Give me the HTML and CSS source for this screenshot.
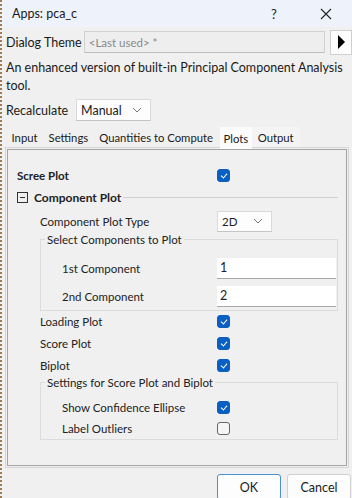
FILE: index.html
```html
<!DOCTYPE html>
<html>
<head>
<meta charset="utf-8">
<link rel="stylesheet" href="styles.css">
</head>
<body>
<div class="win">
  <div class="titlebar">
    <span class="title">Apps: pca_c</span>
    <span class="help">?</span>
    <span class="close"><svg width="12" height="12" viewBox="0 0 12 12"><path d="M1 1L11 11M11 1L1 11" stroke="#222" stroke-width="1.1" fill="none"/></svg></span>
  </div>
  <div class="theme-row">
    <span class="theme-label">Dialog Theme</span>
    <div class="theme-input">&lt;Last used&gt; *</div>
    <div class="theme-btn"><svg width="8" height="14" viewBox="0 0 8 14"><path d="M1 0L8 7L1 14Z" fill="#000"/></svg></div>
  </div>
  <p class="desc">An enhanced version of built-in Principal Component Analysis tool.</p>
  <div class="recalc-row">
    <span>Recalculate</span>
    <div class="select recalc-select"><span>Manual</span><svg width="10" height="6" viewBox="0 0 10 6"><path d="M1 1L5 5L9 1" stroke="#777" fill="none"/></svg></div>
  </div>
  <div class="tabs">
    <span class="tab">Input</span>
    <span class="tab">Settings</span>
    <span class="tab">Quantities to Compute</span>
    <span class="tab active">Plots</span>
    <span class="tab light">Output</span>
  </div>
  <div class="panel">
    <div class="panel-inner">
      <div class="row l0 bold"><span class="label">Scree Plot</span><span class="cb on"></span></div>
      <div class="section">
        <span class="minus"></span><span class="sec-title">Component Plot</span><span class="sec-line"></span>
      </div>
      <div class="row l1"><span class="label">Component Plot Type</span><div class="select type-select"><span>2D</span><svg width="10" height="6" viewBox="0 0 10 6"><path d="M1 1L5 5L9 1" stroke="#777" fill="none"/></svg></div></div>
      <fieldset class="group">
        <legend>Select Components to Plot</legend>
        <div class="row l2 inrow"><span class="label">1st Component</span><div class="textbox">1</div></div>
        <div class="row l2 inrow"><span class="label">2nd Component</span><div class="textbox">2</div></div>
      </fieldset>
      <div class="row l1 cbrow"><span class="label">Loading Plot</span><span class="cb on"></span></div>
      <div class="row l1 cbrow"><span class="label">Score Plot</span><span class="cb on"></span></div>
      <div class="row l1 cbrow"><span class="label">Biplot</span><span class="cb on"></span></div>
      <fieldset class="group group2">
        <legend>Settings for Score Plot and Biplot</legend>
        <div class="row l2 cbrow"><span class="label">Show Confidence Ellipse</span><span class="cb on"></span></div>
        <div class="row l2 cbrow"><span class="label">Label Outliers</span><span class="cb"></span></div>
      </fieldset>
    </div>
  </div>
  <div class="buttons">
    <div class="btn ok">OK</div>
    <div class="btn">Cancel</div>
  </div>
</div>
</body>
</html>
```
FILE: styles.css
```css
* { box-sizing: border-box; }
html, body { margin: 0; padding: 0; }
body {
  width: 352px; height: 498px; overflow: hidden;
  font-family: Lato, "Noto Sans", sans-serif;
  color: #1a1a1a;
  background: #f0f0f0;
}
.win {
  width: 352px; height: 498px;
  border-left: 2px dotted #a07a52;
  background: #f0f0f0;
  white-space: nowrap;
}
.titlebar {
  height: 27px;
  background: #eef2fa;
  display: flex; align-items: center;
  font-size: 12.5px;
  padding-left: 10px;
}
.title { flex: 1; }
.help { width: 45px; font-size: 13px; }
.close { width: 36px; display: flex; justify-content: flex-start; padding-left: 4px; }
.theme-row {
  display: flex; align-items: center;
  height: 26px; margin-top: 2px;
  padding-left: 4px;
}
.theme-label { font-size: 12.5px; width: 78px; }
.theme-input {
  width: 242px; height: 22px;
  border: 1px solid #d2d2d2;
  border-bottom-color: #bdbdbd;
  background: #eeeeee;
  color: #8a8a8a;
  font-size: 11.5px;
  display: flex; align-items: center; padding-left: 4px;
}
.theme-btn {
  margin-left: 5px;
  width: 22px; height: 25px;
  background: #fdfdfd;
  border: 1px solid #d0d0d0;
  display: flex; align-items: center; justify-content: center;
}
.desc {
  margin: 4px 0 0 4px;
  font-size: 12.5px; line-height: 18px;
  width: 343px;
  white-space: normal;
}
.recalc-row {
  display: flex; align-items: center;
  margin-top: 4px; padding-left: 4px;
  font-size: 12.5px;
  height: 22px;
}
.recalc-row > span { width: 70px; }
.select {
  background: #fdfdfd;
  border: 1px solid #dadada;
  border-bottom-color: #c4c4c4;
  display: flex; align-items: center; justify-content: space-between;
  padding: 0 8px 0 4px;
}
.recalc-select { width: 75px; height: 22px; font-size: 12.5px; }
.tabs {
  display: flex; align-items: stretch;
  margin-top: 6px; padding-left: 4px;
  height: 20px;
  font-size: 11.3px;
}
.tab { padding: 0 5.5px; display: flex; align-items: center; }
.tab.active { background: #fbfbfb; height: 22px; padding: 0 4px; margin-left: 1px; }
.tab.light { background: #f4f4f4; padding-right: 6px; }
.panel {
  margin: 0 3px 0 3px;
  border: 1px solid #d6d6d6;
  padding: 1px;
  height: 321px;
}
.panel-inner {
  height: 100%;
  border: 1px solid #a4a4a4;
  padding: 14px 0 0 0;
  font-size: 11.5px;
  color: #222;
}
.row { display: flex; align-items: center; height: 22px; }
.row .label { flex: 0 0 auto; }
.l0 { padding-left: 9px; }
.l0 .label { width: 200px; }
.l1 { padding-left: 32px; }
.l1 .label { width: 177px; }
.l2 { padding-left: 21px; }
.l2 .label { width: 155px; }
.bold { font-weight: bold; }
.cb {
  width: 13px; height: 13px;
  border-radius: 3px;
  border: 1px solid #666;
  background: #f6f6f6;
  display: inline-block;
  position: relative;
}
.cb.on {
  background: #0a5fc2;
  border-color: #0a5fc2;
}
.cb.on::after {
  content: "";
  position: absolute;
  left: 3.5px; top: 2px;
  width: 3px; height: 5px;
  border-right: 1px solid #fff;
  border-bottom: 1px solid #fff;
  transform: rotate(40deg);
}
.section {
  display: flex; align-items: center;
  padding-left: 9px;
  height: 23px;
  margin-bottom: 1px;
  font-weight: bold;
  font-size: 12px;
}
.minus {
  width: 11px; height: 11px;
  border: 1px solid #333;
  position: relative;
  margin-right: 6px;
}
.minus::after {
  content: ""; position: absolute;
  left: 2px; right: 2px; top: 4px; height: 1px; background: #333;
}
.sec-line { flex: 1; height: 1px; background: #cfcfcf; margin: 0 8px 0 2px; }
.type-select { width: 55px; height: 21px; font-size: 11.5px; }
.group {
  margin: 1px 8px -1px 32px;
  padding: 8px 0 0 0;
  border: 1px solid #dcdcdc;
  min-width: 0;
}
.group legend {
  padding: 0 2px; margin-left: 4px;
  font-size: 11.5px;
}
.inrow { height: 28px; }
.textbox {
  width: 119px; height: 21px;
  background: #fff;
  border-bottom: 1px solid #a8a8a8;
  font-size: 12.5px;
  display: flex; align-items: center; padding-left: 3px;
}
.cbrow { height: 22px; }
.group2 { margin-top: 0; padding-top: 8px; }
.group2 .cbrow { height: 21px; }
.buttons {
  display: flex; justify-content: flex-end; gap: 6px;
  margin-top: 6px; padding-right: 1px;
}
.btn {
  width: 64px; height: 26px;
  background: #fdfdfd;
  border: 1px solid #d0d0d0;
  border-radius: 3px;
  font-size: 12.5px;
  display: flex; align-items: center; justify-content: center;
}
.btn.ok { border: 1px solid #4a8fd4; }
```
